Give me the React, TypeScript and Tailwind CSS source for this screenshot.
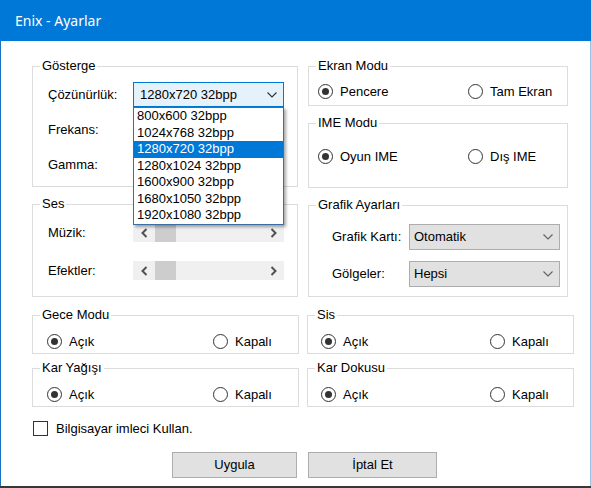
import type { ReactNode } from 'react';

function Group({ title, className, children }: { title: string; className: string; children?: ReactNode }) {
  return (
    <div className={`relative border border-[#dcdcdc] ${className}`}>
      <span className="absolute -top-[9px] left-[7px] bg-white px-[2px] leading-[16px]">{title}</span>
      {children}
    </div>
  );
}

function Radio({ checked, label }: { checked?: boolean; label: string }) {
  return (
    <div className="flex items-center gap-[7px]">
      <span className="w-[15px] h-[15px] rounded-full border border-[#333333] bg-white flex items-center justify-center shrink-0">
        {checked && <span className="w-[7px] h-[7px] rounded-full bg-[#333333]" />}
      </span>
      <span className="leading-[15px]">{label}</span>
    </div>
  );
}

function Chevron({ color }: { color: string }) {
  return (
    <svg width="10" height="6" viewBox="0 0 10 6" fill="none">
      <path d="M0.5 0.5 L5 5 L9.5 0.5" stroke={color} strokeWidth="1.1" />
    </svg>
  );
}

function ScrollBar() {
  return (
    <div className="w-[151px] h-[19px] bg-[#f0f0f0] flex items-center">
      <div className="w-[22px] h-full flex items-center justify-center">
        <svg width="7" height="10" viewBox="0 0 7 10" fill="none">
          <path d="M5.5 1 L1.5 5 L5.5 9" stroke="#505050" strokeWidth="2" />
        </svg>
      </div>
      <div className="w-[21px] h-full bg-[#cdcdcd]" />
      <div className="flex-1" />
      <div className="w-[22px] h-full flex items-center justify-center">
        <svg width="7" height="10" viewBox="0 0 7 10" fill="none">
          <path d="M1.5 1 L5.5 5 L1.5 9" stroke="#505050" strokeWidth="2" />
        </svg>
      </div>
    </div>
  );
}

function GrayCombo({ value }: { value: string }) {
  return (
    <div className="w-[151px] h-[26px] bg-[#e1e1e1] border border-[#adadad] flex items-center justify-between pl-[4px] pr-[6px]">
      <span>{value}</span>
      <Chevron color="#606060" />
    </div>
  );
}

const resolutions = [
  '800x600 32bpp',
  '1024x768 32bpp',
  '1280x720 32bpp',
  '1280x1024 32bpp',
  '1600x900 32bpp',
  '1680x1050 32bpp',
  '1920x1080 32bpp',
];

export default function App() {
  return (
    <div className="w-[591px] h-[488px] flex flex-col bg-[#383838] overflow-hidden font-['Liberation_Sans',Arial,sans-serif] text-[13px] text-black">
      {/* title bar */}
      <div className="h-[41px] shrink-0 bg-[#0078d7] flex items-center pl-[15px] text-white text-[14px] font-['Noto_Sans',sans-serif]">
        Enix - Ayarlar
      </div>

      <div className="h-[445px] shrink-0 bg-white border-l border-l-[#1a73c0] border-r border-r-[#9dc3e6] pl-[31px] pt-[25px]">
        <div className="grid grid-cols-[266px_260px] gap-x-[10px]">
          {/* left column */}
          <div className="flex flex-col gap-[17px]">
            <Group title="Gösterge" className="h-[121px] pt-[15px] pl-[15px]">
              <div className="flex flex-col gap-[10px]">
                <div className="flex items-center h-[25px]">
                  <span className="w-[85px]">Çözünürlük:</span>
                  <div className="relative z-10">
                    <div className="w-[151px] h-[25px] bg-[#e5f1fb] border border-[#0078d7] flex items-center justify-between pl-[6px] pr-[6px]">
                      <span>1280x720 32bpp</span>
                      <Chevron color="#333333" />
                    </div>
                    {/* open dropdown */}
                    <div className="absolute top-full left-0 w-[151px] bg-white border border-[#3b6ea5] shadow-[2px_2px_3px_rgba(0,0,0,0.35)]">
                      {resolutions.map((r) => (
                        <div
                          key={r}
                          className={`h-[16.5px] leading-[16.5px] pl-[3px] ${
                            r === '1280x720 32bpp' ? 'bg-[#0078d7] text-white' : ''
                          }`}
                        >
                          {r}
                        </div>
                      ))}
                    </div>
                  </div>
                </div>
                <div className="flex items-center h-[25px]">
                  <span className="w-[85px]">Frekans:</span>
                  <div className="w-[151px] h-[25px] bg-[#e1e1e1] border border-[#adadad]" />
                </div>
                <div className="flex items-center h-[25px]">
                  <span className="w-[85px]">Gamma:</span>
                  <div className="w-[151px] h-[25px] bg-[#e1e1e1] border border-[#adadad]" />
                </div>
              </div>
            </Group>

            <Group title="Ses" className="h-[93px] pt-[18px] pl-[15px]">
              <div className="flex flex-col gap-[19px]">
                <div className="flex items-center h-[19px]">
                  <span className="w-[85px]">Müzik:</span>
                  <ScrollBar />
                </div>
                <div className="flex items-center h-[19px]">
                  <span className="w-[85px]">Efektler:</span>
                  <ScrollBar />
                </div>
              </div>
            </Group>
          </div>

          {/* right column */}
          <div className="flex flex-col gap-[17px]">
            <Group title="Ekran Modu" className="h-[40px] pt-[17px] pl-[9px]">
              <div className="flex items-center">
                <div className="w-[150px]">
                  <Radio checked label="Pencere" />
                </div>
                <Radio label="Tam Ekran" />
              </div>
            </Group>

            <Group title="IME Modu" className="h-[65px] pt-[25px] pl-[9px]">
              <div className="flex items-center">
                <div className="w-[150px]">
                  <Radio checked label="Oyun IME" />
                </div>
                <Radio label="Dış IME" />
              </div>
            </Group>

            <Group title="Grafik Ayarları" className="h-[92px] pt-[18px] pl-[23px]">
              <div className="flex flex-col gap-[11px]">
                <div className="flex items-center">
                  <span className="w-[77px]">Grafik Kartı:</span>
                  <GrayCombo value="Otomatik" />
                </div>
                <div className="flex items-center">
                  <span className="w-[77px]">Gölgeler:</span>
                  <GrayCombo value="Hepsi" />
                </div>
              </div>
            </Group>
          </div>
        </div>

        {/* on/off groups */}
        <div className="mt-[18px] grid grid-cols-[267px_267px] gap-x-[8px] gap-y-[14px]">
          <Group title="Gece Modu" className="h-[39px] pt-[18px] pl-[14px]">
            <div className="flex items-center">
              <div className="w-[166px]">
                <Radio checked label="Açık" />
              </div>
              <Radio label="Kapalı" />
            </div>
          </Group>
          <Group title="Sis" className="h-[39px] pt-[18px] pl-[13px]">
            <div className="flex items-center">
              <div className="w-[169px]">
                <Radio checked label="Açık" />
              </div>
              <Radio label="Kapalı" />
            </div>
          </Group>
          <Group title="Kar Yağışı" className="h-[39px] pt-[18px] pl-[14px]">
            <div className="flex items-center">
              <div className="w-[166px]">
                <Radio checked label="Açık" />
              </div>
              <Radio label="Kapalı" />
            </div>
          </Group>
          <Group title="Kar Dokusu" className="h-[39px] pt-[18px] pl-[13px]">
            <div className="flex items-center">
              <div className="w-[169px]">
                <Radio checked label="Açık" />
              </div>
              <Radio label="Kapalı" />
            </div>
          </Group>
        </div>

        <div className="mt-[12px] flex items-center gap-[8px] pl-[1px]">
          <span className="w-[15px] h-[15px] border border-[#333333] bg-white" />
          <span>Bilgisayar imleci Kullan.</span>
        </div>

        <div className="mt-[13px] flex gap-[11px] pl-[140px]">
          <button className="w-[125px] h-[26px] bg-[#e1e1e1] border border-[#adadad]">Uygula</button>
          <button className="w-[129px] h-[26px] bg-[#e1e1e1] border border-[#adadad]">İptal Et</button>
        </div>
      </div>
    </div>
  );
}
